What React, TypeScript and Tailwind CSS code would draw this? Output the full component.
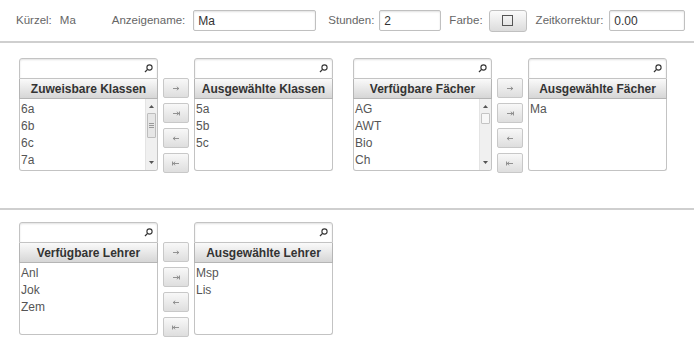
import React from "react";

interface IListProps {
  title: string;
  items: string[];
  scroll?: "big" | "small";
}

//?magnifier in the filter field
const SearchIcon = () => (
  <svg width="9" height="9" viewBox="0 0 9 9" className="absolute right-[4px] top-[5px]">
    <circle cx="5.5" cy="3.5" r="2.6" fill="none" stroke="#333" strokeWidth="1.1" />
    <line x1="3.6" y1="5.4" x2="1" y2="8" stroke="#333" strokeWidth="1.3" />
  </svg>
);

const Scrollbar = ({ size }: { size: "big" | "small" }) => (
  <div className="absolute right-0 top-0 bottom-0 w-[12px] bg-[#f0f0f0] border-l border-[#e4e4e4]">
    <svg width="5" height="3" viewBox="0 0 5 3" className="absolute left-[3px] top-[6px]">
      <polygon points="2.5,0 5,3 0,3" fill="#555" />
    </svg>
    <div
      className={
        size === "big"
          ? "absolute left-[1px] right-[1px] top-[14px] h-[25px] bg-[#e6e6e6] border border-[#bdbdbd] rounded-[1px] flex flex-col items-center justify-center gap-[1px]"
          : "absolute left-[1px] right-[1px] top-[14px] h-[11px] bg-[#f7f7f7] border border-[#c4c4c4] rounded-[1px]"
      }
    >
      {size === "big" && (
        <>
          <div className="w-[5px] h-px bg-[#999]" />
          <div className="w-[5px] h-px bg-[#999]" />
          <div className="w-[5px] h-px bg-[#999]" />
        </>
      )}
    </div>
    <svg width="5" height="3" viewBox="0 0 5 3" className="absolute left-[3px] bottom-[6px]">
      <polygon points="0,0 5,0 2.5,3" fill="#555" />
    </svg>
  </div>
);

const ListPanel: React.FC<IListProps> = ({ title, items, scroll }) => {
  return (
    <div className="w-[139px] flex flex-col">
      {/* filter */}
      <div className="relative h-[21px] border border-[#c3c3c3] rounded-t-[3px] bg-white shadow-[inset_0_1px_2px_rgba(0,0,0,0.12)]">
        <SearchIcon />
      </div>
      {/* header */}
      <div className="h-[20px] border-x border-b border-[#b5b5b5] bg-gradient-to-b from-[#fafafa] to-[#d6d6d6] flex items-center justify-center text-[12px] font-bold text-[#333]">
        {title}
      </div>
      {/* list */}
      <div className="relative h-[72px] border-x border-b border-[#c3c3c3] rounded-b-[3px] bg-white overflow-hidden pl-[1px] pt-[2px]">
        {items.map((item) => (
          <div key={item} className="text-[12px] leading-[17px] text-[#555]">
            {item}
          </div>
        ))}
        {scroll && <Scrollbar size={scroll} />}
      </div>
    </div>
  );
};

const ArrowIcon = ({ kind }: { kind: "add" | "addAll" | "remove" | "removeAll" }) => {
  const right = kind === "add" || kind === "addAll";
  return (
    <svg width="8" height="5" viewBox="0 0 8 5">
      <line x1="1" y1="2.5" x2="7" y2="2.5" stroke="#888" strokeWidth="0.9" />
      {right ? (
        <polyline points="4.8,0.8 6.8,2.5 4.8,4.2" fill="none" stroke="#888" strokeWidth="0.9" />
      ) : (
        <polyline points="3.2,0.8 1.2,2.5 3.2,4.2" fill="none" stroke="#888" strokeWidth="0.9" />
      )}
      {kind === "addAll" && <line x1="7.5" y1="0.5" x2="7.5" y2="4.5" stroke="#888" strokeWidth="0.9" />}
      {kind === "removeAll" && <line x1="0.5" y1="0.5" x2="0.5" y2="4.5" stroke="#888" strokeWidth="0.9" />}
    </svg>
  );
};

const MoveButtons = () => (
  <div className="flex flex-col gap-[5px] pt-[20px]">
    {(["add", "addAll", "remove", "removeAll"] as const).map((k) => (
      <button
        key={k}
        className="w-[26px] h-[20px] border border-[#c8c8c8] rounded-[2px] bg-gradient-to-b from-[#f8f8f8] to-[#dedede] flex items-center justify-center"
      >
        <ArrowIcon kind={k} />
      </button>
    ))}
  </div>
);

const DualList = ({
  left,
  right,
}: {
  left: IListProps;
  right: IListProps;
}) => (
  <div className="flex gap-[5px]">
    <ListPanel {...left} />
    <MoveButtons />
    <ListPanel {...right} />
  </div>
);

const Field = ({ value, width }: { value: string; width: string }) => (
  <div
    className={`${width} h-[21px] border border-[#c0c0c0] rounded-[2px] bg-white shadow-[inset_0_1px_2px_rgba(0,0,0,0.12)] flex items-center pl-[4px] text-[12px] text-[#333]`}
  >
    {value}
  </div>
);

export default function App() {
  return (
    <div className="w-[694px] h-[356px] bg-white font-['Liberation_Sans',Arial,sans-serif] text-[#666] overflow-hidden">
      {/* Stammdaten */}
      <div className="h-[41px] flex items-center pl-[16px] text-[11.5px]">
        <span>Kürzel:</span>
        <span className="ml-[8px]">Ma</span>
        <span className="ml-[36px]">Anzeigename:</span>
        <div className="ml-[8px]">
          <Field value="Ma" width="w-[123px]" />
        </div>
        <span className="ml-[12px]">Stunden:</span>
        <div className="ml-[5px]">
          <Field value="2" width="w-[62px]" />
        </div>
        <span className="ml-[8px]">Farbe:</span>
        <button className="ml-[6px] w-[38px] h-[22px] border border-[#c0c0c0] rounded-[3px] bg-gradient-to-b from-[#fbfbfb] to-[#dcdcdc] flex items-center justify-center">
          <div className="w-[11px] h-[11px] border-[1.5px] border-[#555]" />
        </button>
        <span className="ml-[9px]">Zeitkorrektur:</span>
        <div className="ml-[6px]">
          <Field value="0.00" width="w-[76px]" />
        </div>
      </div>
      <div className="h-[2px] bg-[#cfcfcf]" />

      {/* Klassen / Fächer */}
      <div className="flex gap-[20px] pl-[19px] pt-[15px]">
        <DualList
          left={{ title: "Zuweisbare Klassen", items: ["6a", "6b", "6c", "7a"], scroll: "big" }}
          right={{ title: "Ausgewählte Klassen", items: ["5a", "5b", "5c"] }}
        />
        <DualList
          left={{ title: "Verfügbare Fächer", items: ["AG", "AWT", "Bio", "Ch"], scroll: "small" }}
          right={{ title: "Ausgewählte Fächer", items: ["Ma"] }}
        />
      </div>
      <div className="mt-[35px] h-[2px] bg-[#cfcfcf]" />

      {/* Lehrer */}
      <div className="flex pl-[19px] pt-[12px]">
        <DualList
          left={{ title: "Verfügbare Lehrer", items: ["Anl", "Jok", "Zem"] }}
          right={{ title: "Ausgewählte Lehrer", items: ["Msp", "Lis"] }}
        />
      </div>
    </div>
  );
}
